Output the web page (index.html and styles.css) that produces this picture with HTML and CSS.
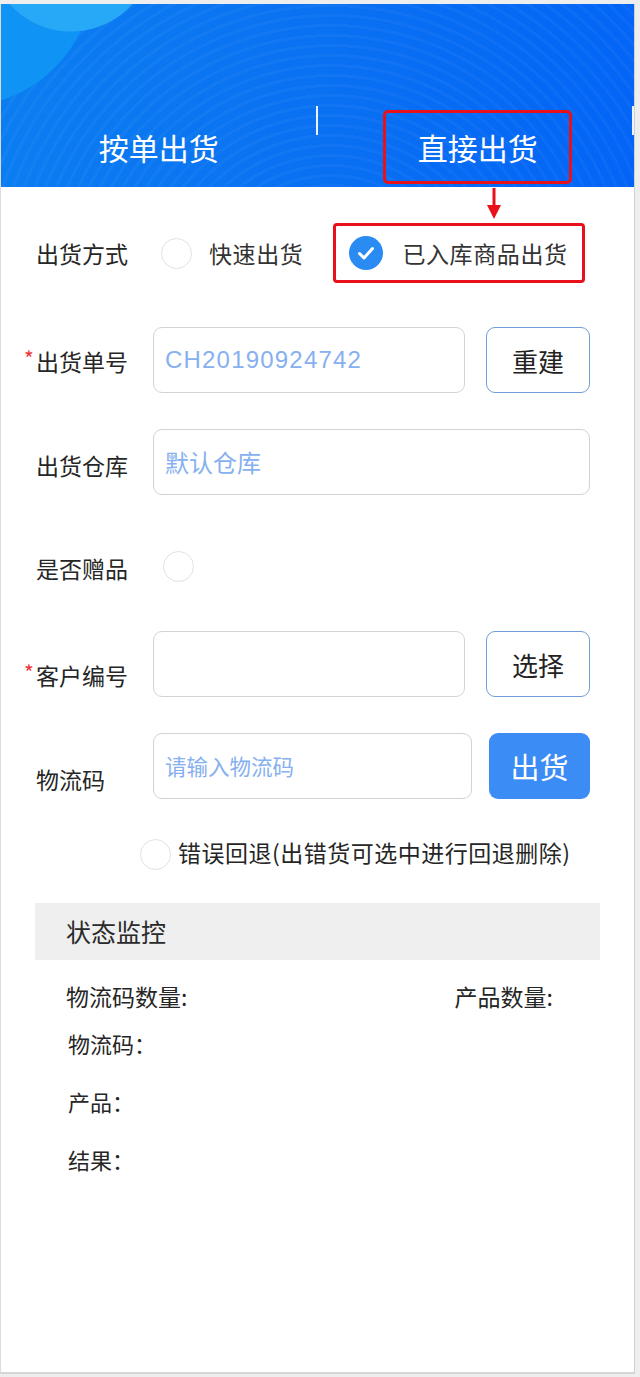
FILE: index.html
```html
<!DOCTYPE html>
<html lang="zh-CN">
<head>
<meta charset="utf-8">
<title>直接出货</title>
<link rel="stylesheet" href="styles.css">
</head>
<body>
<div class="page">
  <header class="hero">
    <div class="tab"><span class="tab-label">按单出货</span></div>
    <span class="divider"></span>
    <div class="tab"><span class="tab-label tab-active">直接出货</span></div>
    <span class="divider"></span>
  </header>

  <svg class="arrow" width="16" height="34" viewBox="0 0 16 34">
    <line x1="8" y1="0" x2="8" y2="20" stroke="#e8101a" stroke-width="3"/>
    <polygon points="1,17 15,17 8,31" fill="#e8101a"/>
  </svg>

  <main class="form">
    <div class="row row-method">
      <div class="label">出货方式</div>
      <div class="option option-first">
        <span class="radio"></span>
        <span class="option-text">快速出货</span>
      </div>
      <div class="option option-boxed">
        <span class="radio radio-on">
          <svg width="34" height="34" viewBox="0 0 34 34"><polyline points="10.5,17.5 15,22 23.5,12.5" fill="none" stroke="#fff" stroke-width="3" stroke-linecap="round" stroke-linejoin="round"/></svg>
        </span>
        <span class="option-text">已入库商品出货</span>
      </div>
    </div>

    <div class="row row-field">
      <div class="label label-o1"><span class="req">*</span>出货单号</div>
      <div class="input input-short"><span class="ph ph-code">CH20190924742</span></div>
      <button class="btn btn-outline">重建</button>
    </div>

    <div class="row row-field">
      <div class="label label-o3">出货仓库</div>
      <div class="input input-full"><span class="ph ph-big">默认仓库</span></div>
    </div>

    <div class="row row-gift">
      <div class="label label-o5">是否赠品</div>
      <span class="radio radio-gift"></span>
    </div>

    <div class="row row-field">
      <div class="label label-o11"><span class="req">*</span>客户编号</div>
      <div class="input input-short"></div>
      <button class="btn btn-outline">选择</button>
    </div>

    <div class="row row-field">
      <div class="label label-o13">物流码</div>
      <div class="input input-mid"><span class="ph ph-small">请输入物流码</span></div>
      <button class="btn btn-primary">出货</button>
    </div>

    <div class="row row-rollback">
      <span class="radio"></span>
      <span class="rollback-text">错误回退(出错货可选中进行回退删除)</span>
    </div>
  </main>

  <section class="status">
    <div class="status-head">状态监控</div>
    <div class="status-counts">
      <span>物流码数量:</span>
      <span class="count-right">产品数量:</span>
    </div>
    <div class="status-line status-line-first">物流码：</div>
    <div class="status-line">产品：</div>
    <div class="status-line">结果：</div>
  </section>
</div>
</body>
</html>
```

FILE: styles.css
```css
* { box-sizing: border-box; }

html, body {
  margin: 0;
  padding: 0;
}

body {
  background: #eeeeee;
  font-family: "Noto Sans CJK SC", "Noto Sans", sans-serif;
  color: #2a2a2a;
  width: 640px;
  height: 1377px;
  overflow: hidden;
}

.page {
  position: relative;
  box-sizing: content-box;
  width: 633px;
  height: 1368px;
  margin-top: 4px;
  background: #ffffff;
  border-left: 1px solid #dcdcdc;
  border-right: 1px solid #d0d0d0;
  border-bottom: 2px solid #d6d6d6;
}

/* ---------- header ---------- */
.hero {
  height: 183px;
  display: flex;
  align-items: flex-end;
  padding-bottom: 3px;
  background:
    radial-gradient(circle at 70px -55px, #27a9f7 0 82px, rgba(39,169,247,0) 83px),
    radial-gradient(circle at -40px -30px, #0f93f4 0 132px, rgba(15,147,244,0) 133px),
    repeating-radial-gradient(circle at 330px 300px, rgba(255,255,255,0) 0 7px, rgba(255,255,255,0.035) 7px 10px),
    linear-gradient(100deg, #0b7ef1 0%, #0a72f2 45%, #0364f6 100%);
}

.tab {
  flex: 1;
  text-align: center;
}

.tab-label {
  display: inline-block;
  padding: 0 32px 0 33px;
  border: 3px solid transparent;
  border-radius: 5px;
  font-size: 30px;
  line-height: 68px;
  color: #ffffff;
}

.tab-active {
  border-color: #e8101a;
  margin-left: 5px;
  padding: 0 31px 0 32px;
}

.divider {
  width: 2px;
  height: 29px;
  margin-bottom: 49px;
  background: rgba(255,255,255,0.92);
}

.arrow {
  position: absolute;
  left: 485px;
  top: 184px;
}

/* ---------- form ---------- */
.form {
  padding: 36px 43px 0 35px;
}

.row {
  display: flex;
  align-items: center;
}

.label {
  width: 117px;
  flex: none;
  font-size: 23px;
  line-height: 30px;
  color: #262626;
  white-space: nowrap;
}

.label-o1 { margin-top: 2px; }
.label-o3 { margin-top: 6px; }
.label-o5 { margin-top: 10px; }
.label-o11 { margin-top: 22px; }
.label-o13 { margin-top: 26px; }

.req {
  display: inline-block;
  width: 12px;
  margin-left: -12px;
  font-size: 21px;
  line-height: 17px;
  vertical-align: 4px;
  color: #f0323a;
}

.row-method {
  height: 60px;
}

.option {
  display: flex;
  align-items: center;
}

.option-first {
  margin-left: 8px;
}

.option-text {
  font-size: 23px;
  line-height: 30px;
  letter-spacing: 0.6px;
  color: #333;
  white-space: nowrap;
}

.option .radio + .option-text {
  margin-left: 17px;
}

.option-boxed {
  height: 60px;
  margin-left: 30px;
  padding: 0 14px 0 13px;
  border: 3px solid #e8101a;
  border-radius: 4px;
}

.option-boxed .radio + .option-text {
  margin-left: 19px;
}

.radio {
  flex: none;
  width: 31px;
  height: 31px;
  border-radius: 50%;
  border: 1px solid #e2e2e2;
  background: #fff;
}

.radio-on {
  width: 34px;
  height: 34px;
  border: none;
  background: #2a8cf2;
  display: flex;
}

.row-field {
  height: 66px;
  margin-top: 36px;
}

.row-method + .row-field {
  margin-top: 44px;
}

.input {
  height: 66px;
  border: 1.5px solid #d3d3d3;
  border-radius: 9px;
  display: flex;
  align-items: center;
  padding-left: 11px;
}

.input-short { width: 312px; }
.input-full { width: 437px; }
.input-mid { width: 319px; }

.ph {
  color: #86b0ef;
  white-space: nowrap;
}

.ph-code {
  font-family: "Liberation Sans", Arial, sans-serif;
  font-size: 24px;
  letter-spacing: 1.2px;
}

.ph-big {
  font-size: 24px;
  line-height: 30px;
}

.ph-small {
  font-size: 21.5px;
  line-height: 30px;
}

.btn {
  height: 66px;
  border-radius: 9px;
  font-family: "Noto Sans CJK SC", sans-serif;
  padding: 0;
  cursor: pointer;
}

.btn-outline {
  width: 104px;
  margin-left: 21px;
  background: #fff;
  border: 1.5px solid #6f9fd6;
  color: #222;
  font-size: 26px;
}

.btn-primary {
  width: 101px;
  margin-left: 17px;
  background: #3b8cf4;
  border: none;
  color: #fff;
  font-size: 29px;
}

.row-gift {
  height: 64px;
  margin-top: 36px;
}

.radio-gift {
  margin-left: 10px;
  margin-top: 6px;
}

.row-rollback {
  height: 34px;
  margin-top: 38px;
  padding-left: 104px;
}

.rollback-text {
  margin-left: 7px;
  margin-top: -4px;
  font-size: 23px;
  line-height: 30px;
  letter-spacing: 0.5px;
  color: #262626;
  white-space: nowrap;
}

/* ---------- status ---------- */
.status {
  width: 565px;
  margin: 32px 0 0 34px;
}

.status-head {
  height: 57px;
  background: #efefef;
  padding-left: 31px;
  font-size: 25px;
  line-height: 57px;
  color: #2a2a2a;
}

.status-counts {
  display: flex;
  margin-top: 21px;
  padding-left: 31px;
  font-size: 23px;
  line-height: 30px;
  color: #262626;
}

.count-right {
  margin-left: auto;
  margin-right: 47px;
}

.status-line {
  margin-top: 17px;
  padding-left: 33px;
  font-size: 22px;
  line-height: 30px;
  color: #262626;
}

.status-line + .status-line {
  margin-top: 28px;
}
```
